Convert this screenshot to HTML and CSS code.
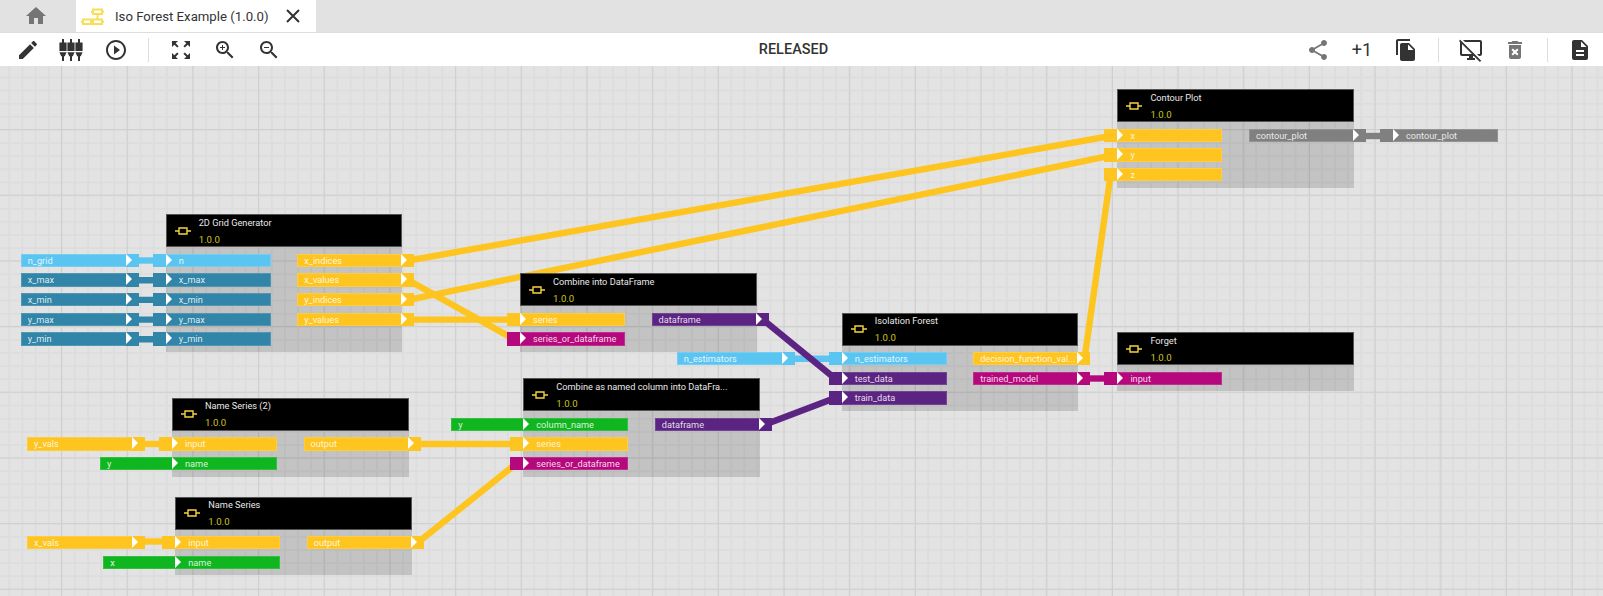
FILE: index.html
```html
<!DOCTYPE html>
<html lang="en">
<head>
    <meta charset="UTF-8">
    <title>Iso Forest Example (1.0.0)</title>
    <link rel="stylesheet" href="styles.css">
</head>
<body>

<div class="tabbar">
    <div class="home-tab">
        <svg class="icon grey" viewBox="0 0 24 24"><path d="M10 20v-6h4v6h5v-8h3L12 3 2 12h3v8z"/></svg>
    </div>
    <div class="tab">
        <svg class="tab-icon" viewBox="0 0 24 17"><path d="M2 11.500h8V16H2zM12 11.500h9V16h-9zM12 1.500h9V6h-9zM10 13.750h2M16.500 6v5.500M0 13.750h2M21 13.750h2M10 3.750h2M21 3.750h2"/></svg>
        <span class="tab-title">Iso Forest Example (1.0.0)</span>
        <svg class="tab-close" viewBox="0 0 14 14"><path d="M1 1l12 12M13 1L1 13"/></svg>
    </div>
</div>

<div class="toolbar">
    <div class="tools">
        <svg class="icon" viewBox="0 0 24 24"><path d="M3 17.250V21h3.750L17.810 9.940l-3.750-3.750L3 17.250zM20.710 7.040c.39-.39.39-1.020 0-1.410l-2.340-2.340c-.39-.39-1.020-.39-1.410 0l-1.830 1.830 3.750 3.750 1.830-1.830z"/></svg>
        <svg class="icon" viewBox="0 0 24 24"><path d="M2 1h2v3.500h2.600V13H-.6V4.500H2zM-.6 14.200h7.200l-1.800 4H4V23H2v-4.800h-.8zM10 1h2v3.500h2.600V13H7.400V4.500H10zM7.400 14.200h7.200l-1.800 4H12V23h-2v-4.800h-.8zM18 1h2v3.500h2.600V13h-7.200V4.500H18zM15.400 14.200h7.200l-1.800 4H20V23h-2v-4.800h-.8z"/></svg>
        <svg class="icon" viewBox="0 0 24 24"><path d="M10 16.500l6-4.500-6-4.500v9zM12 2C6.480 2 2 6.480 2 12s4.480 10 10 10 10-4.480 10-10S17.520 2 12 2zm0 18c-4.410 0-8-3.590-8-8s3.590-8 8-8 8 3.590 8 8-3.590 8-8 8z"/></svg>
        <div class="sep"></div>
        <svg class="icon" viewBox="0 0 24 24"><path d="M15 3l2.300 2.300-2.890 2.870 1.420 1.420L18.700 6.700 21 9V3zM3 9l2.300-2.300 2.870 2.890 1.420-1.420L6.700 5.300 9 3H3zm6 12l-2.300-2.300 2.890-2.870-1.420-1.420L5.300 17.300 3 15v6zm12-6l-2.300 2.300-2.870-2.890-1.420 1.420 2.890 2.870L15 21h6z"/></svg>
        <svg class="icon" viewBox="0 0 24 24"><path d="M15.500 14h-.79l-.28-.27C15.410 12.590 16 11.110 16 9.500 16 5.910 13.090 3 9.500 3S3 5.910 3 9.500 5.910 16 9.500 16c1.610 0 3.090-.59 4.230-1.570l.27.28v.79l5 4.990L20.490 19l-4.990-5zm-6 0C7.010 14 5 11.990 5 9.500S7.010 5 9.500 5 14 7.010 14 9.500 11.990 14 9.500 14z"/><path d="M12 10h-2v2H9v-2H7V9h2V7h1v2h2v1z"/></svg>
        <svg class="icon" viewBox="0 0 24 24"><path d="M15.500 14h-.79l-.28-.27C15.410 12.590 16 11.110 16 9.500 16 5.910 13.090 3 9.500 3S3 5.910 3 9.500 5.910 16 9.500 16c1.610 0 3.090-.59 4.230-1.570l.27.28v.79l5 4.990L20.490 19l-4.990-5zm-6 0C7.010 14 5 11.990 5 9.500S7.010 5 9.500 5 14 7.010 14 9.500 11.990 14 9.500 14zM7 9h5v1H7z"/></svg>
    </div>
    <div class="status">RELEASED</div>
    <div class="tools right">
        <svg class="icon grey" viewBox="0 0 24 24"><path d="M18 16.080c-.76 0-1.440.3-1.960.77L8.910 12.700c.05-.23.09-.46.09-.7s-.04-.47-.09-.7l7.050-4.110c.54.5 1.250.81 2.040.81 1.660 0 3-1.340 3-3s-1.340-3-3-3-3 1.340-3 3c0 .24.04.47.09.7L8.040 9.810C7.500 9.310 6.790 9 6 9c-1.660 0-3 1.340-3 3s1.340 3 3 3c.79 0 1.500-.31 2.040-.81l7.120 4.160c-.05.21-.08.43-.08.65 0 1.610 1.310 2.920 2.920 2.920 1.610 0 2.920-1.310 2.920-2.920s-1.310-2.920-2.920-2.920z"/></svg>
        <span class="plus-one">+1</span>
        <svg class="icon" viewBox="0 0 24 24"><path d="M16 1H4c-1.100 0-2 .9-2 2v14h2V3h12V1zm-1 4l6 6v10c0 1.100-.9 2-2 2H7.990C6.890 23 6 22.100 6 21l.01-14c0-1.100.89-2 1.990-2h7zm-1 7h5.500L14 6.500V12z"/></svg>
        <div class="sep"></div>
        <svg class="icon" viewBox="0 0 24 24"><path d="M23 16c0 1.100-.9 2-2 2h-1l-2-2h3V4H6L4 2h17c1.100 0 2 .9 2 2v12zm-8.100 2l6 6 1.300-1.300-4.700-4.700-2-2L1.200 1.800 0 3.100l1 1V16c0 1.100.9 2 2 2h7v2H8v2h8v-2h-2v-2h.9zM3 16V6.100l9.900 9.900H3z"/></svg>
        <svg class="icon grey" viewBox="0 0 24 24"><path d="M6 19c0 1.100.9 2 2 2h8c1.100 0 2-.9 2-2V7H6v12zm2.460-7.120l1.410-1.410L12 12.590l2.120-2.120 1.410 1.410L13.410 14l2.120 2.120-1.410 1.410L12 15.410l-2.120 2.120-1.410-1.410L10.590 14l-2.130-2.120zM15.500 4l-1-1h-5l-1 1H5v2h14V4z"/></svg>
        <div class="sep"></div>
        <svg class="icon" viewBox="0 0 24 24"><path d="M14 2H6c-1.100 0-1.990.9-1.990 2L4 20c0 1.100.89 2 1.990 2H18c1.100 0 2-.9 2-2V8l-6-6zm2 16H8v-2h8v2zm0-4H8v-2h8v2zm-3-5V3.500L18.500 9H13z"/></svg>
    </div>
</div>

<div class="canvas">
    <!-- links between ports, y is measured from the top of the canvas -->
    <svg class="links" viewBox="0 0 1603 530">
        <g class="link-light">
            <path d="M132 194.500H160"/>
            <path d="M789 292.800H835"/>
        </g>
        <g class="link-teal">
            <path d="M132 214.200H160M132 233.900H160M132 253.600H160M132 273.300H160"/>
        </g>
        <g class="link-yellow">
            <path d="M408.500 194.500L1110.500 70"/>
            <path d="M408.500 233.900L1110.500 89.700"/>
            <path d="M408.500 214.200L513.500 273"/>
            <path d="M408.500 253.600H513.500"/>
            <path d="M139 378H166"/>
            <path d="M139 475.500H169"/>
            <path d="M415 378H516.500"/>
            <path d="M418.500 476L516.500 397.500"/>
            <path d="M1084.500 292.800L1110.500 109.500"/>
        </g>
        <g class="link-purple">
            <path d="M762.500 253.300L835 312.500"/>
            <path d="M766.500 358L835 332"/>
        </g>
        <path class="link-magenta" d="M1084.500 312.500H1110.500"/>
        <path class="link-grey" d="M1360 70H1387"/>
    </svg>

    <section class="node node-grid">
        <header class="head">
            <svg class="chip" viewBox="0 0 16 8"><path d="M4 1h8v6H4zM0 4h4M12 4h4"/></svg>
            <div class="head-text"><span class="name">2D Grid Generator</span><span class="version">1.0.0</span></div>
        </header>
        <div class="body">
            <div class="ports">
                <div class="port in light">n<div class="feed">n_grid</div></div>
                <div class="port in teal">x_max<div class="feed">x_max</div></div>
                <div class="port in teal">x_min<div class="feed">x_min</div></div>
                <div class="port in teal">y_max<div class="feed">y_max</div></div>
                <div class="port in teal">y_min<div class="feed">y_min</div></div>
            </div>
            <div class="ports">
                <div class="port out yellow">x_indices</div>
                <div class="port out yellow">x_values</div>
                <div class="port out yellow">y_indices</div>
                <div class="port out yellow">y_values</div>
            </div>
        </div>
    </section>

    <section class="node node-frame">
        <header class="head">
            <svg class="chip" viewBox="0 0 16 8"><path d="M4 1h8v6H4zM0 4h4M12 4h4"/></svg>
            <div class="head-text"><span class="name">Combine into DataFrame</span><span class="version">1.0.0</span></div>
        </header>
        <div class="body">
            <div class="ports">
                <div class="port in yellow">series</div>
                <div class="port in magenta">series_or_dataframe</div>
            </div>
            <div class="ports">
                <div class="port out purple">dataframe</div>
            </div>
        </div>
    </section>

    <section class="node node-column">
        <header class="head">
            <svg class="chip" viewBox="0 0 16 8"><path d="M4 1h8v6H4zM0 4h4M12 4h4"/></svg>
            <div class="head-text"><span class="name">Combine as named column into DataFra...</span><span class="version">1.0.0</span></div>
        </header>
        <div class="body">
            <div class="ports">
                <div class="port in green bare">column_name<div class="feed short">y</div></div>
                <div class="port in yellow">series</div>
                <div class="port in magenta">series_or_dataframe</div>
            </div>
            <div class="ports">
                <div class="port out purple">dataframe</div>
            </div>
        </div>
    </section>

    <section class="node node-series2">
        <header class="head">
            <svg class="chip" viewBox="0 0 16 8"><path d="M4 1h8v6H4zM0 4h4M12 4h4"/></svg>
            <div class="head-text"><span class="name">Name Series (2)</span><span class="version">1.0.0</span></div>
        </header>
        <div class="body">
            <div class="ports">
                <div class="port in yellow">input<div class="feed">y_vals</div></div>
                <div class="port in green bare">name<div class="feed short">y</div></div>
            </div>
            <div class="ports">
                <div class="port out yellow">output</div>
            </div>
        </div>
    </section>

    <section class="node node-series">
        <header class="head">
            <svg class="chip" viewBox="0 0 16 8"><path d="M4 1h8v6H4zM0 4h4M12 4h4"/></svg>
            <div class="head-text"><span class="name">Name Series</span><span class="version">1.0.0</span></div>
        </header>
        <div class="body">
            <div class="ports">
                <div class="port in yellow">input<div class="feed far">x_vals</div></div>
                <div class="port in green bare">name<div class="feed short">x</div></div>
            </div>
            <div class="ports">
                <div class="port out yellow">output</div>
            </div>
        </div>
    </section>

    <section class="node node-forest">
        <header class="head">
            <svg class="chip" viewBox="0 0 16 8"><path d="M4 1h8v6H4zM0 4h4M12 4h4"/></svg>
            <div class="head-text"><span class="name">Isolation Forest</span><span class="version">1.0.0</span></div>
        </header>
        <div class="body">
            <div class="ports">
                <div class="port in light">n_estimators<div class="feed farther">n_estimators</div></div>
                <div class="port in purple">test_data</div>
                <div class="port in purple">train_data</div>
            </div>
            <div class="ports">
                <div class="port out yellow">decision_function_val...</div>
                <div class="port out magenta">trained_model</div>
            </div>
        </div>
    </section>

    <section class="node node-contour">
        <header class="head">
            <svg class="chip" viewBox="0 0 16 8"><path d="M4 1h8v6H4zM0 4h4M12 4h4"/></svg>
            <div class="head-text"><span class="name">Contour Plot</span><span class="version">1.0.0</span></div>
        </header>
        <div class="body">
            <div class="ports">
                <div class="port in yellow">x</div>
                <div class="port in yellow">y</div>
                <div class="port in yellow">z</div>
            </div>
            <div class="ports">
                <div class="port out grey-port">contour_plot<div class="sink">contour_plot</div></div>
            </div>
        </div>
    </section>

    <section class="node node-forget">
        <header class="head">
            <svg class="chip" viewBox="0 0 16 8"><path d="M4 1h8v6H4zM0 4h4M12 4h4"/></svg>
            <div class="head-text"><span class="name">Forget</span><span class="version">1.0.0</span></div>
        </header>
        <div class="body">
            <div class="ports">
                <div class="port in magenta">input</div>
            </div>
        </div>
    </section>
</div>

</body>
</html>
```

FILE: styles.css
```css
* {
    box-sizing: border-box;
}

html, body {
    height: 100%;
}

body {
    margin: 0;
    display: flex;
    flex-direction: column;
    overflow: hidden;
    font-family: Roboto, sans-serif;
    color: #333;
    background-color: #e2e2e2;
}

/* Tabs */
.tabbar {
    display: flex;
    height: 33px;
    flex: none;
    background-color: #e2e2e2;
    border-bottom: 1px solid #ddd;
}

.home-tab {
    width: 76px;
    padding: 4px 0 0 24px;
}

.tab {
    width: 240px;
    height: 32px;
    display: flex;
    align-items: center;
    padding-left: 5px;
    background-color: #fff;
}

.tab-icon {
    width: 24px;
    height: 17px;
    margin-top: 1px;
    fill: none;
    stroke: #f9dd52;
    stroke-width: 1.8;
}

.tab-title {
    margin-left: 10px;
    font-size: 13.2px;
    white-space: nowrap;
}

.tab-close {
    width: 14px;
    height: 14px;
    margin-left: 17px;
    fill: none;
    stroke: #333;
    stroke-width: 2;
}

/* Toolbar */
.toolbar {
    display: flex;
    align-items: center;
    height: 33px;
    flex: none;
    padding: 0 11px 0 16px;
    background-color: #fff;
}

.tools {
    display: flex;
    align-items: center;
    gap: 20px;
}

.status {
    flex: 1;
    text-align: center;
    font-size: 14.5px;
    font-weight: 500;
}

.sep {
    width: 1px;
    height: 24px;
    background-color: #ddd;
}

.icon {
    display: block;
    width: 24px;
    height: 24px;
    fill: #333;
    overflow: visible;
}

.icon.grey {
    fill: #757575;
}

.plus-one {
    width: 24px;
    text-align: center;
    font-size: 18px;
}

/* Canvas with the grid behind the nodes */
.canvas {
    position: relative;
    flex: 1;
    overflow: hidden;
    background-color: #e3e3e3;
    background-image:
        linear-gradient(to right, #cfcfcf 1px, transparent 1px),
        linear-gradient(to bottom, #cfcfcf 1px, transparent 1px),
        linear-gradient(to right, #dddddd 1.5px, transparent 1.5px),
        linear-gradient(to bottom, #dddddd 1.5px, transparent 1.5px);
    background-size: 65.7px 65.7px, 65.7px 65.7px, 13.14px 13.14px, 13.14px 13.14px;
    background-position: 61px 63px, 61px 63px, 8.4px 10.5px, 8.4px 10.5px;
}

.links {
    position: absolute;
    left: 0;
    top: 0;
    width: 1603px;
    height: 530px;
    fill: none;
    stroke-width: 6.4;
}

.link-light { stroke: #5bc5f2; }
.link-teal { stroke: #3085a8; }
.link-yellow { stroke: #fec41f; }
.link-purple { stroke: #5c2482; }
.link-magenta { stroke: #b6087d; }
.link-grey { stroke: #808080; }

/* Nodes */
.node {
    position: absolute;
    width: 236.5px;
}

.node-grid { left: 165.7px; top: 148.3px; }
.node-frame { left: 520px; top: 207.3px; }
.node-column { left: 523.3px; top: 312.3px; }
.node-series2 { left: 172px; top: 331.9px; }
.node-series { left: 175.3px; top: 430.7px; }
.node-forest { left: 841.7px; top: 246.7px; }
.node-contour { left: 1117.4px; top: 23.3px; }
.node-forget { left: 1117.4px; top: 266.3px; }

.head {
    display: flex;
    align-items: center;
    height: 33px;
    padding-left: 8px;
    background-color: #000;
    border: 1px solid #555;
}

.chip {
    width: 16px;
    height: 8px;
    fill: none;
    stroke: #f5d33f;
    stroke-width: 1.4;
}

.head-text {
    display: flex;
    flex-direction: column;
    gap: 6px;
    margin-left: 8px;
    font-size: 9.2px;
}

.name {
    line-height: 11px;
    color: #e8e8e8;
    white-space: nowrap;
}

.version {
    line-height: 11px;
    font-size: 9.6px;
    color: #c9c41c;
}

.body {
    display: flex;
    justify-content: space-between;
    padding: 6.4px 0;
    background-color: rgba(0, 0, 0, 0.14);
}

.ports {
    display: flex;
    flex-direction: column;
    gap: 6.4px;
}

.port, .feed, .sink {
    position: relative;
    width: 105px;
    height: 13.3px;
    line-height: 12px;
    font-size: 9.2px;
    color: rgba(255, 255, 255, 0.85);
    white-space: nowrap;
    background-color: var(--port);
    border: 1px solid rgba(255, 255, 255, 0.15);
}

.port.in { padding-left: 12px; }
.port.out, .feed { padding-left: 6px; }

.light { --port: #5bc5f2; }
.teal { --port: #3085a8; }
.yellow { --port: #fec41f; }
.purple { --port: #5c2482; }
.magenta { --port: #b6087d; }
.green { --port: #10b61f; }
.grey-port { --port: #808080; }

/* stubs next to the ports */
.port.in::after, .port.out::after, .feed::after, .sink::after {
    content: "";
    position: absolute;
    top: -1px;
    width: 13px;
    height: 13.3px;
    background-color: var(--port);
}

.port.in::after, .sink::after { left: -14px; }
.port.out::after { left: 103px; }
.feed::after { left: 104px; }
.port.bare::after { display: none; }

/* arrow on a port */
.port.in::before, .port.out::before, .feed::before, .sink::before {
    content: "";
    position: absolute;
    top: -1px;
    z-index: 1;
    border-left: 6px solid #fff;
    border-top: 6.6px solid transparent;
    border-bottom: 6.6px solid transparent;
}

.port.in::before, .sink::before { left: -1px; }
.port.out::before { left: 103px; }
.feed::before { left: 104px; }

.feed {
    position: absolute;
    top: -1px;
    right: calc(100% + 40px);
    width: 106px;
}

.feed.far { right: calc(100% + 43.3px); }
.feed.farther { right: calc(100% + 60px); }

.feed.short {
    right: 100%;
    width: 73px;
}

.feed.short::after, .feed.short::before {
    display: none;
}

.sink {
    position: absolute;
    top: -1px;
    left: 143px;
    padding-left: 12px;
}
```
